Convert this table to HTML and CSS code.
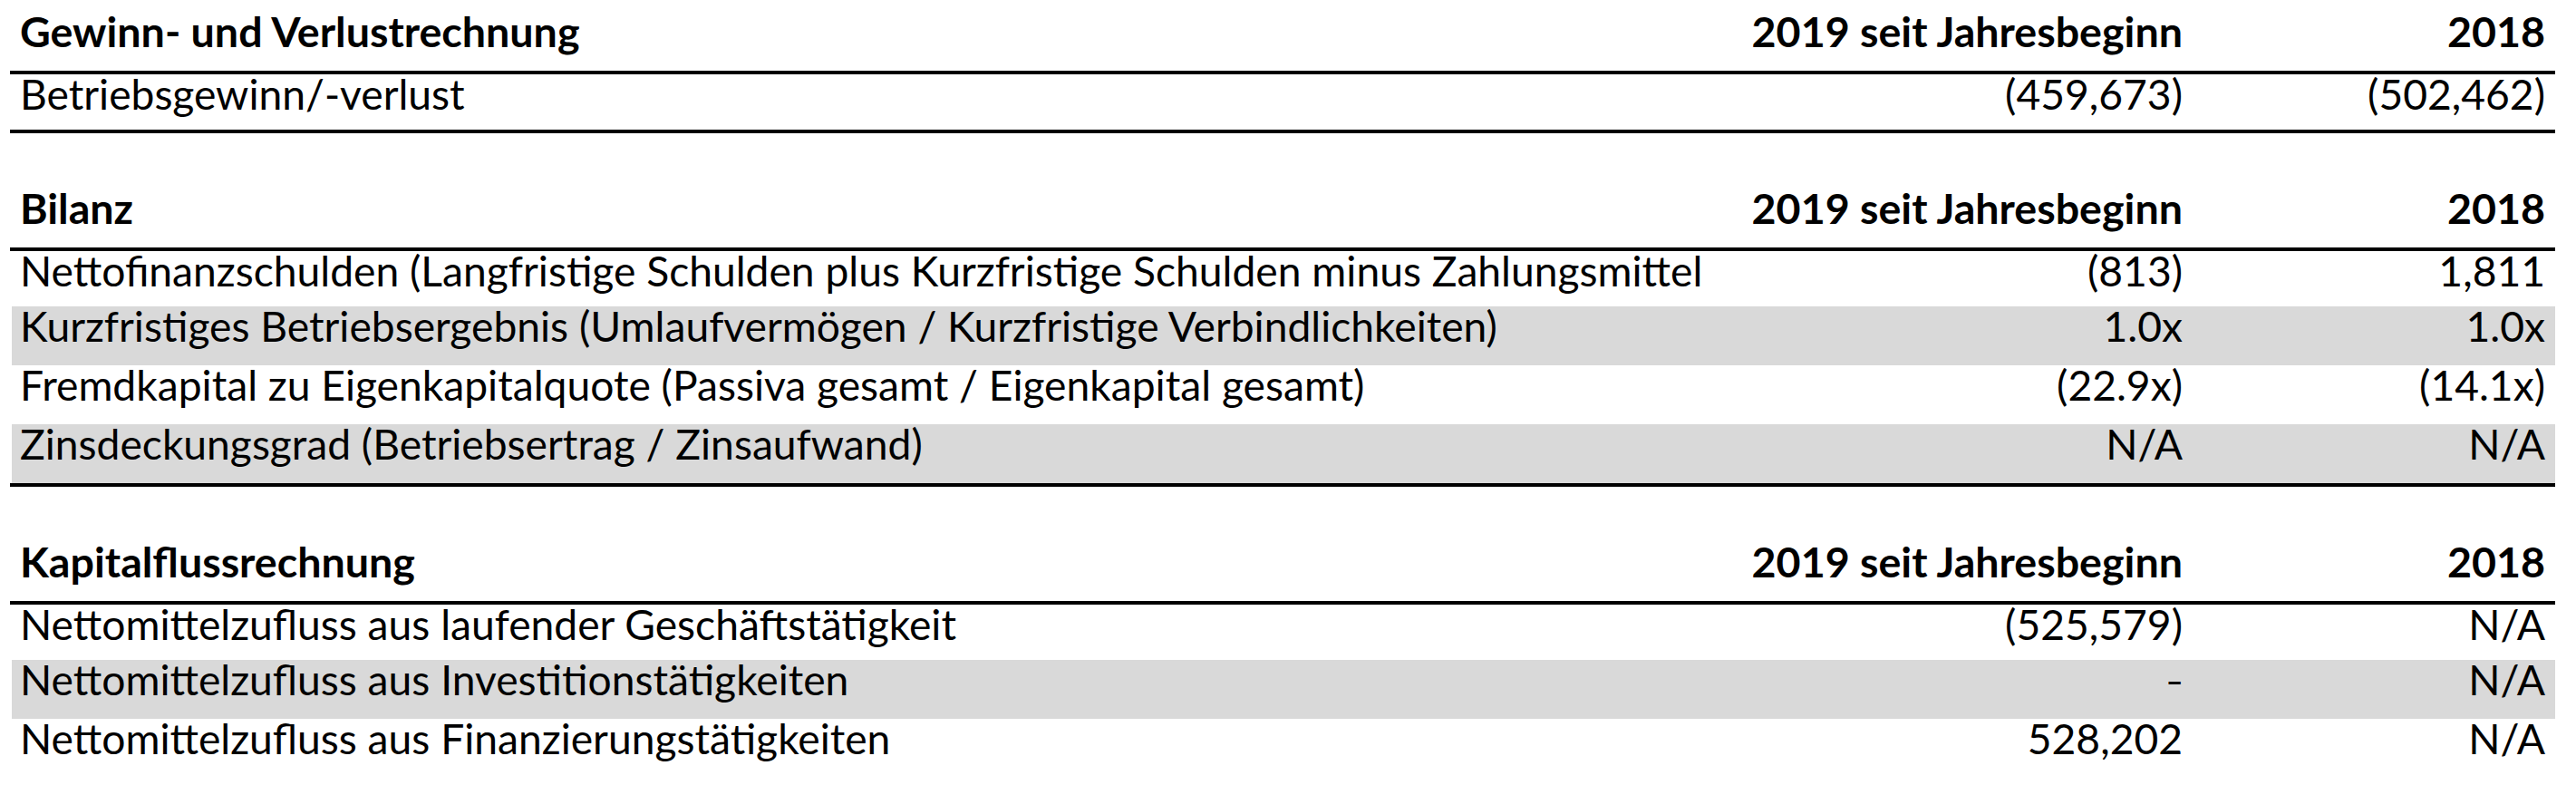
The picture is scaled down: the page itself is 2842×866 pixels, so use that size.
FILE: index.html
```html
<!DOCTYPE html>
<html lang="de">
<head>
<meta charset="utf-8">
<title>Finanzkennzahlen</title>
<link rel="stylesheet" href="styles.css">
</head>
<body>
<div class="report">
  <section class="block">
    <div class="row head">
      <div class="label">Gewinn- und Verlustrechnung</div>
      <div class="num">2019 seit Jahresbeginn</div>
      <div class="num">2018</div>
    </div>
    <div class="row">
      <div class="label">Betriebsgewinn/-verlust</div>
      <div class="num">(459,673)</div>
      <div class="num">(502,462)</div>
    </div>
  </section>

  <section class="block">
    <div class="row head">
      <div class="label">Bilanz</div>
      <div class="num">2019 seit Jahresbeginn</div>
      <div class="num">2018</div>
    </div>
    <div class="row">
      <div class="label">Nettofinanzschulden (Langfristige Schulden plus Kurzfristige Schulden minus Zahlungsmittel</div>
      <div class="num">(813)</div>
      <div class="num">1,811</div>
    </div>
    <div class="row shade">
      <div class="label">Kurzfristiges Betriebsergebnis (Umlaufvermögen / Kurzfristige Verbindlichkeiten)</div>
      <div class="num">1.0x</div>
      <div class="num">1.0x</div>
    </div>
    <div class="row">
      <div class="label">Fremdkapital zu Eigenkapitalquote (Passiva gesamt / Eigenkapital gesamt)</div>
      <div class="num">(22.9x)</div>
      <div class="num">(14.1x)</div>
    </div>
    <div class="row shade">
      <div class="label">Zinsdeckungsgrad (Betriebsertrag / Zinsaufwand)</div>
      <div class="num">N/A</div>
      <div class="num">N/A</div>
    </div>
  </section>

  <section class="block open">
    <div class="row head">
      <div class="label">Kapitalflussrechnung</div>
      <div class="num">2019 seit Jahresbeginn</div>
      <div class="num">2018</div>
    </div>
    <div class="row">
      <div class="label">Nettomittelzufluss aus laufender Geschäftstätigkeit</div>
      <div class="num">(525,579)</div>
      <div class="num">N/A</div>
    </div>
    <div class="row shade">
      <div class="label">Nettomittelzufluss aus Investitionstätigkeiten</div>
      <div class="num"><span class="dash">–</span></div>
      <div class="num">N/A</div>
    </div>
    <div class="row">
      <div class="label">Nettomittelzufluss aus Finanzierungstätigkeiten</div>
      <div class="num">528,202</div>
      <div class="num">N/A</div>
    </div>
  </section>
</div>
</body>
</html>
```

FILE: styles.css
```css
html, body {
  margin: 0;
  padding: 0;
  background: #ffffff;
}

body {
  font-family: Lato, "Liberation Sans", sans-serif;
  font-size: 46.2px;
  color: #000000;
}

.report {
  width: 2808px;
  margin-left: 11px;
  display: flex;
  flex-direction: column;
  gap: 48px;
}

.block {
  display: flex;
  flex-direction: column;
  border-bottom: 4px solid #000000;
}

.block.open {
  border-bottom: none;
}

.row {
  display: grid;
  grid-template-columns: minmax(0, 1fr) 600px 400px;
  height: 65px;
  line-height: 42px;
  box-sizing: border-box;
}

.row.head {
  height: 82px;
  padding-top: 13px;
  border-bottom: 4px solid #000000;
  font-weight: 700;
  font-size: 46.6px;
}

.row.head + .row {
  height: 61px;
}

.row.shade {
  background: #d9d9d9;
  margin-left: 2px;
}

.label {
  padding-left: 11px;
  white-space: nowrap;
}

.row.shade .label {
  padding-left: 9px;
}

.num {
  text-align: right;
  padding-right: 11px;
  white-space: nowrap;
}

.dash {
  display: inline-block;
  transform: scaleX(0.72);
  transform-origin: right center;
  margin-right: -1px;
}
```
